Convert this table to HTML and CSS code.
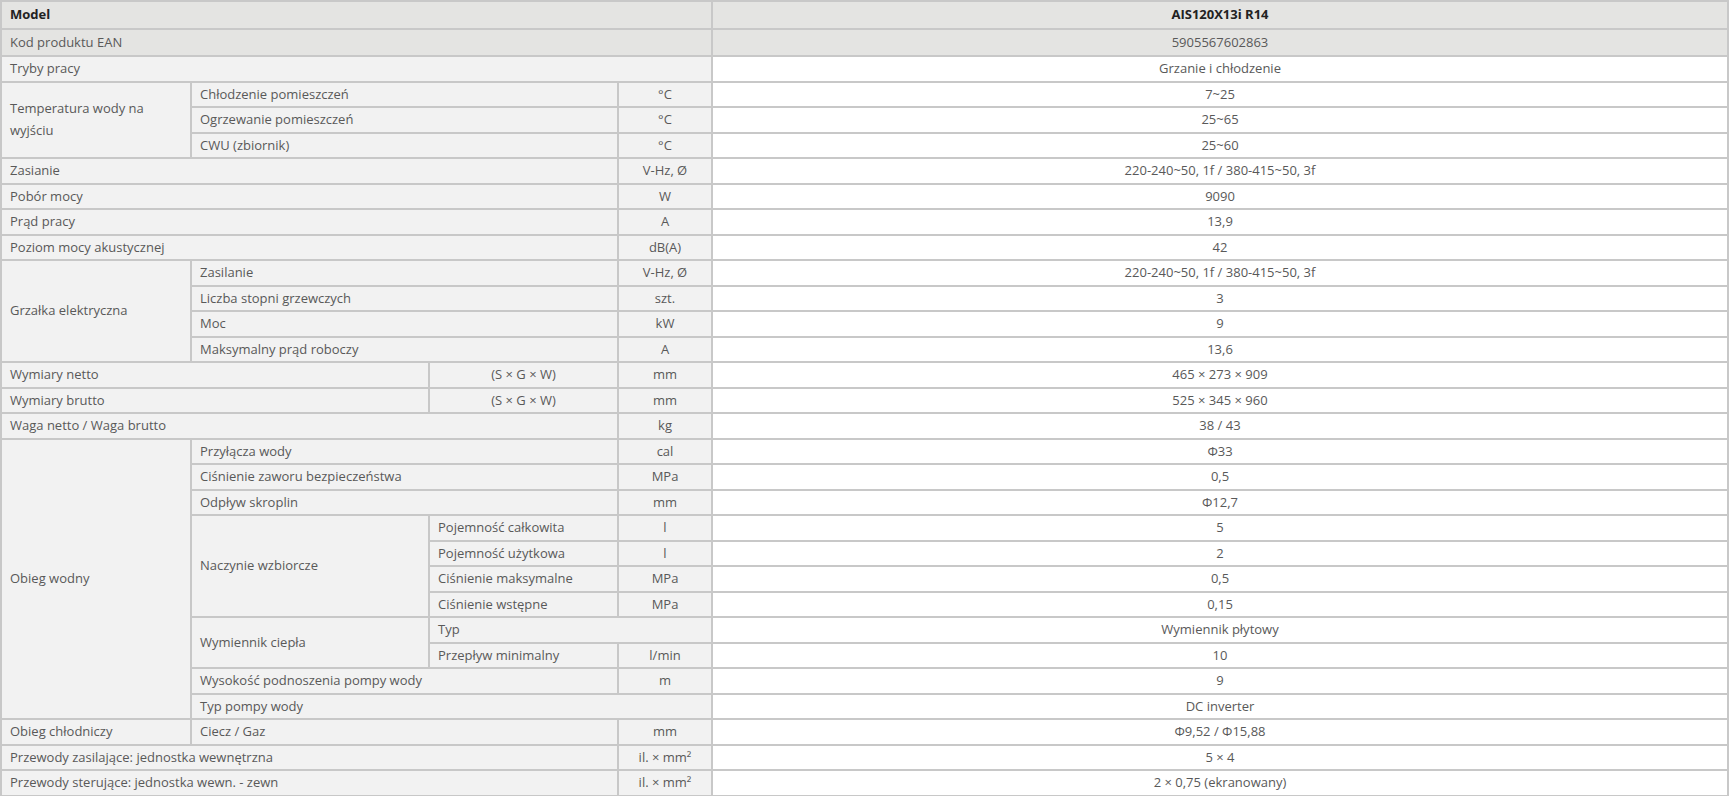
FILE: index.html
```html
<!DOCTYPE html>
<html lang="pl">
<head>
<meta charset="utf-8">
<title>Specyfikacja</title>
<link rel="stylesheet" href="styles.css">
</head>
<body>
<table class="spec">
  <colgroup>
    <col class="c1"><col class="c2"><col class="c3"><col class="c4"><col class="c5">
  </colgroup>
  <tbody>
    <tr class="head">
      <td colspan="4" class="lbl strong">Model</td>
      <td class="val strong">AIS120X13i R14</td>
    </tr>
    <tr class="head">
      <td colspan="4" class="lbl">Kod produktu EAN</td>
      <td class="val">5905567602863</td>
    </tr>
    <tr>
      <td colspan="4" class="lbl">Tryby pracy</td>
      <td class="val">Grzanie i chłodzenie</td>
    </tr>
    <tr>
      <td rowspan="3" class="lbl">Temperatura wody na wyjściu</td>
      <td colspan="2" class="lbl">Chłodzenie pomieszczeń</td>
      <td class="unit">°C</td>
      <td class="val">7~25</td>
    </tr>
    <tr>
      <td colspan="2" class="lbl">Ogrzewanie pomieszczeń</td>
      <td class="unit">°C</td>
      <td class="val">25~65</td>
    </tr>
    <tr>
      <td colspan="2" class="lbl">CWU (zbiornik)</td>
      <td class="unit">°C</td>
      <td class="val">25~60</td>
    </tr>
    <tr>
      <td colspan="3" class="lbl">Zasianie</td>
      <td class="unit">V-Hz, Ø</td>
      <td class="val">220-240~50, 1f / 380-415~50, 3f</td>
    </tr>
    <tr>
      <td colspan="3" class="lbl">Pobór mocy</td>
      <td class="unit">W</td>
      <td class="val">9090</td>
    </tr>
    <tr>
      <td colspan="3" class="lbl">Prąd pracy</td>
      <td class="unit">A</td>
      <td class="val">13,9</td>
    </tr>
    <tr>
      <td colspan="3" class="lbl">Poziom mocy akustycznej</td>
      <td class="unit">dB(A)</td>
      <td class="val">42</td>
    </tr>
    <tr>
      <td rowspan="4" class="lbl">Grzałka elektryczna</td>
      <td colspan="2" class="lbl">Zasilanie</td>
      <td class="unit">V-Hz, Ø</td>
      <td class="val">220-240~50, 1f / 380-415~50, 3f</td>
    </tr>
    <tr>
      <td colspan="2" class="lbl">Liczba stopni grzewczych</td>
      <td class="unit">szt.</td>
      <td class="val">3</td>
    </tr>
    <tr>
      <td colspan="2" class="lbl">Moc</td>
      <td class="unit">kW</td>
      <td class="val">9</td>
    </tr>
    <tr>
      <td colspan="2" class="lbl">Maksymalny prąd roboczy</td>
      <td class="unit">A</td>
      <td class="val">13,6</td>
    </tr>
    <tr>
      <td colspan="2" class="lbl">Wymiary netto</td>
      <td class="unit">(S × G × W)</td>
      <td class="unit">mm</td>
      <td class="val">465 × 273 × 909</td>
    </tr>
    <tr>
      <td colspan="2" class="lbl">Wymiary brutto</td>
      <td class="unit">(S × G × W)</td>
      <td class="unit">mm</td>
      <td class="val">525 × 345 × 960</td>
    </tr>
    <tr>
      <td colspan="3" class="lbl">Waga netto / Waga brutto</td>
      <td class="unit">kg</td>
      <td class="val">38 / 43</td>
    </tr>
    <tr>
      <td rowspan="11" class="lbl">Obieg wodny</td>
      <td colspan="2" class="lbl">Przyłącza wody</td>
      <td class="unit">cal</td>
      <td class="val">Φ33</td>
    </tr>
    <tr>
      <td colspan="2" class="lbl">Ciśnienie zaworu bezpieczeństwa</td>
      <td class="unit">MPa</td>
      <td class="val">0,5</td>
    </tr>
    <tr>
      <td colspan="2" class="lbl">Odpływ skroplin</td>
      <td class="unit">mm</td>
      <td class="val">Φ12,7</td>
    </tr>
    <tr>
      <td rowspan="4" class="lbl">Naczynie wzbiorcze</td>
      <td class="lbl">Pojemność całkowita</td>
      <td class="unit">l</td>
      <td class="val">5</td>
    </tr>
    <tr>
      <td class="lbl">Pojemność użytkowa</td>
      <td class="unit">l</td>
      <td class="val">2</td>
    </tr>
    <tr>
      <td class="lbl">Ciśnienie maksymalne</td>
      <td class="unit">MPa</td>
      <td class="val">0,5</td>
    </tr>
    <tr>
      <td class="lbl">Ciśnienie wstępne</td>
      <td class="unit">MPa</td>
      <td class="val">0,15</td>
    </tr>
    <tr>
      <td rowspan="2" class="lbl">Wymiennik ciepła</td>
      <td colspan="2" class="lbl">Typ</td>
      <td class="val">Wymiennik płytowy</td>
    </tr>
    <tr>
      <td class="lbl">Przepływ minimalny</td>
      <td class="unit">l/min</td>
      <td class="val">10</td>
    </tr>
    <tr>
      <td colspan="2" class="lbl">Wysokość podnoszenia pompy wody</td>
      <td class="unit">m</td>
      <td class="val">9</td>
    </tr>
    <tr>
      <td colspan="3" class="lbl">Typ pompy wody</td>
      <td class="val">DC inverter</td>
    </tr>
    <tr>
      <td class="lbl">Obieg chłodniczy</td>
      <td colspan="2" class="lbl">Ciecz / Gaz</td>
      <td class="unit">mm</td>
      <td class="val">Φ9,52 / Φ15,88</td>
    </tr>
    <tr>
      <td colspan="3" class="lbl">Przewody zasilające: jednostka wewnętrzna</td>
      <td class="unit">il. × mm²</td>
      <td class="val">5 × 4</td>
    </tr>
    <tr>
      <td colspan="3" class="lbl">Przewody sterujące: jednostka wewn. - zewn</td>
      <td class="unit">il. × mm²</td>
      <td class="val">2 × 0,75 (ekranowany)</td>
    </tr>
  </tbody>
</table>
</body>
</html>
```

FILE: styles.css
```css
html, body {
  margin: 0;
  padding: 0;
  background: #ffffff;
}

body {
  font-family: "Open Sans", "Liberation Sans", sans-serif;
  font-size: 13px;
  color: #595959;
}

.spec {
  width: 1729px;
  border-collapse: collapse;
  table-layout: fixed;
}

.c1 { width: 190px; }
.c2 { width: 238px; }
.c3 { width: 189px; }
.c4 { width: 94px; }
.c5 { width: auto; }

.spec td {
  border: 2px solid #c8c8c8;
  padding: 1px 8px;
  line-height: 21.5px;
  vertical-align: middle;
}

.spec .lbl {
  background: #f2f2f2;
  text-align: left;
}

.spec .unit {
  background: #f2f2f2;
  text-align: center;
}

.spec .val {
  background: #ffffff;
  text-align: center;
}

.spec .head td {
  background: #e4e4e2;
  padding-top: 2px;
  padding-bottom: 2px;
}

.spec .strong {
  font-weight: 700;
  color: #222222;
}
```
